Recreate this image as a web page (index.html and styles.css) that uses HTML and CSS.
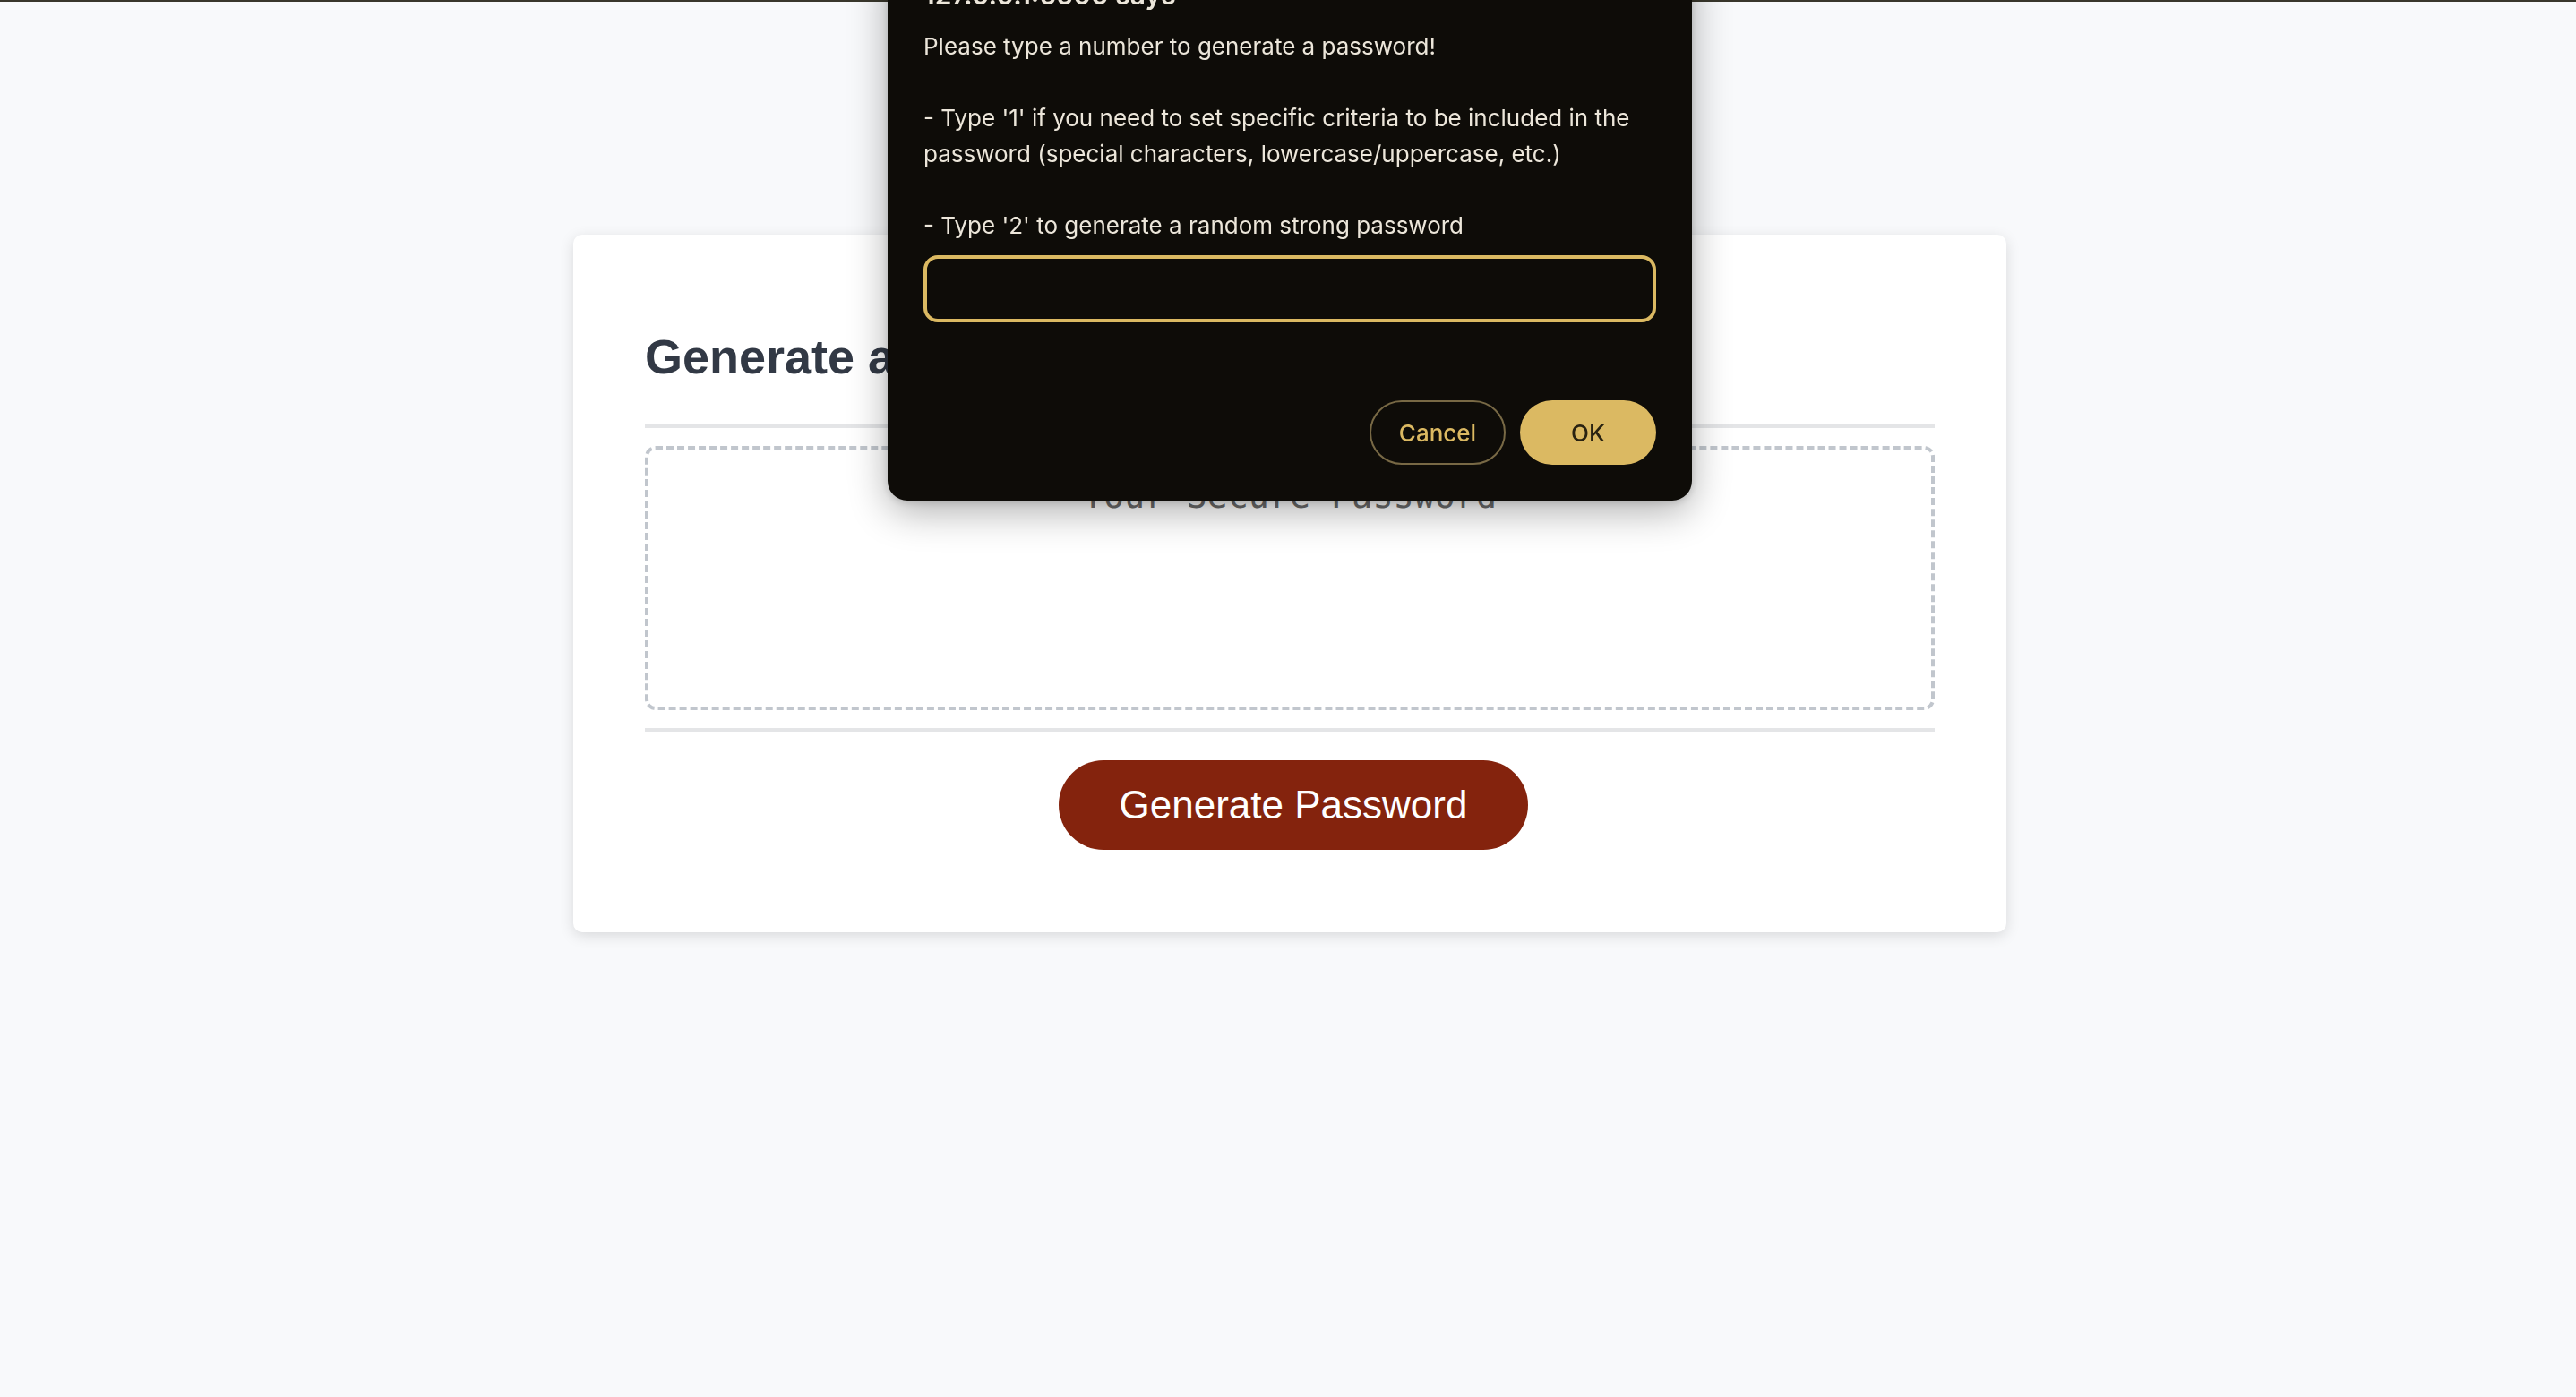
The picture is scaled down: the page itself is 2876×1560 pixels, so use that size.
FILE: index.html
```html
<!DOCTYPE html>
<html lang="en">
<head>
<meta charset="UTF-8">
<title>Password Generator</title>
<link rel="stylesheet" href="styles.css">
</head>
<body>
<div class="topline"></div>
<div class="wrapper">
  <header class="header">
    <h1 class="title">Password Generator</h1>
  </header>
  <div class="card">
    <div class="card-header">
      <h2 class="card-title">Generate a Password</h2>
    </div>
    <div class="card-body">
      <textarea readonly class="password" placeholder="Your Secure Password" aria-label="Generated Password"></textarea>
    </div>
    <div class="card-footer">
      <button class="btn" type="button">Generate Password</button>
    </div>
  </div>
</div>

<div class="prompt" role="dialog" aria-label="127.0.0.1:5500 says">
  <div class="prompt-title">127.0.0.1:5500 says</div>
  <div class="prompt-message">
    <p class="prompt-line">Please type a number to generate a password!</p>
    <p class="prompt-line">- Type '1' if you need to set specific criteria to be included in the password (special characters, lowercase/uppercase, etc.)</p>
    <p class="prompt-line">- Type '2' to generate a random strong password</p>
  </div>
  <input class="prompt-input" type="text" aria-label="Answer">
  <div class="prompt-actions">
    <button class="prompt-btn prompt-cancel" type="button">Cancel</button>
    <button class="prompt-btn prompt-ok" type="button">OK</button>
  </div>
</div>
</body>
</html>
```

FILE: styles.css
```css
*,
*::before,
*::after {
  box-sizing: border-box;
}

html,
body {
  margin: 0;
  padding: 0;
}

body {
  font-family: "Liberation Sans", Arial, sans-serif;
  background-color: #f8f9fb;
  min-height: 100vh;
}

.topline {
  height: 2px;
  background: #39372c;
}

.wrapper {
  padding: 60px 38px 0 42px;
}

.header {
  text-align: center;
  padding: 0 40px 40px;
  color: #323945;
}

.title {
  font-size: 64px;
  margin: 43px 0;
}

.card {
  background-color: #ffffff;
  border-radius: 10px;
  box-shadow: rgba(0, 0, 0, 0.13) 0 4px 16px 0;
  color: #323945;
  font-size: 36px;
  margin: 0 auto;
  max-width: 1600px;
  padding: 60px 80px;
}

.card-title {
  font-size: 54px;
  margin: 45px 0;
  line-height: 62px;
}

.card-header::after {
  content: "";
  display: block;
  width: 100%;
  background: #e4e5e7;
  height: 4px;
}

.card-body {
  min-height: 200px;
}

.password {
  appearance: none;
  display: block;
  width: 100%;
  height: 295px;
  padding: 30px 30px 170px;
  font-family: "DejaVu Sans Mono", "Liberation Mono", monospace;
  font-size: 38.4px;
  line-height: 44px;
  text-align: center;
  margin: 20px 0;
  border: 4px dashed #c1c6cd;
  border-radius: 12px;
  resize: none;
  overflow: hidden;
  background: #ffffff;
}

.password::placeholder {
  color: #6a6a6a;
}

.card-footer {
  text-align: center;
}

.card-footer::before {
  content: "";
  display: block;
  width: 100%;
  background: #e4e5e7;
  height: 4px;
}

.btn {
  border: none;
  background-color: #84230d;
  border-radius: 50px;
  color: #ffffff;
  display: inline-block;
  font-family: "Liberation Sans", Arial, sans-serif;
  font-size: 44px;
  line-height: 44px;
  margin: 32px 32px 32px 40px;
  padding: 28px 68px;
  text-align: center;
  cursor: pointer;
}

/* browser prompt dialog */
.prompt {
  position: fixed;
  top: -52px;
  left: calc(50% - 447px);
  width: 898px;
  padding: 28px 40px 40px;
  background: #0e0c08;
  border-radius: 22px;
  box-shadow: 0 12px 44px rgba(0, 0, 0, 0.32), 0 2px 8px rgba(0, 0, 0, 0.15);
  font-family: Inter, "Noto Sans", sans-serif;
  color: #ece6da;
  display: flex;
  flex-direction: column;
}

.prompt-title {
  font-size: 30px;
  font-weight: 600;
  line-height: 36px;
}

.prompt-message {
  margin-top: 20px;
  font-size: 26px;
  line-height: 40px;
  display: flex;
  flex-direction: column;
  gap: 40px;
}

.prompt-line {
  margin: 0;
}

.prompt-input {
  margin-top: 13px;
  height: 75px;
  width: 100%;
  border: 4px solid #dbb962;
  border-radius: 16px;
  background: #0e0c08;
  color: #ece6da;
  font-family: Inter, sans-serif;
  font-size: 26px;
  padding: 0 18px;
  outline: none;
}

.prompt-actions {
  margin-top: 87px;
  display: flex;
  justify-content: flex-end;
  gap: 16px;
}

.prompt-btn {
  width: 152px;
  height: 72px;
  border-radius: 36px;
  font-family: Inter, sans-serif;
  font-size: 26px;
  font-weight: 500;
  cursor: pointer;
}

.prompt-cancel {
  background: transparent;
  border: 2px solid #786945;
  color: #dbb962;
}

.prompt-ok {
  background: #dbb962;
  border: none;
  color: #2a2311;
}
```
